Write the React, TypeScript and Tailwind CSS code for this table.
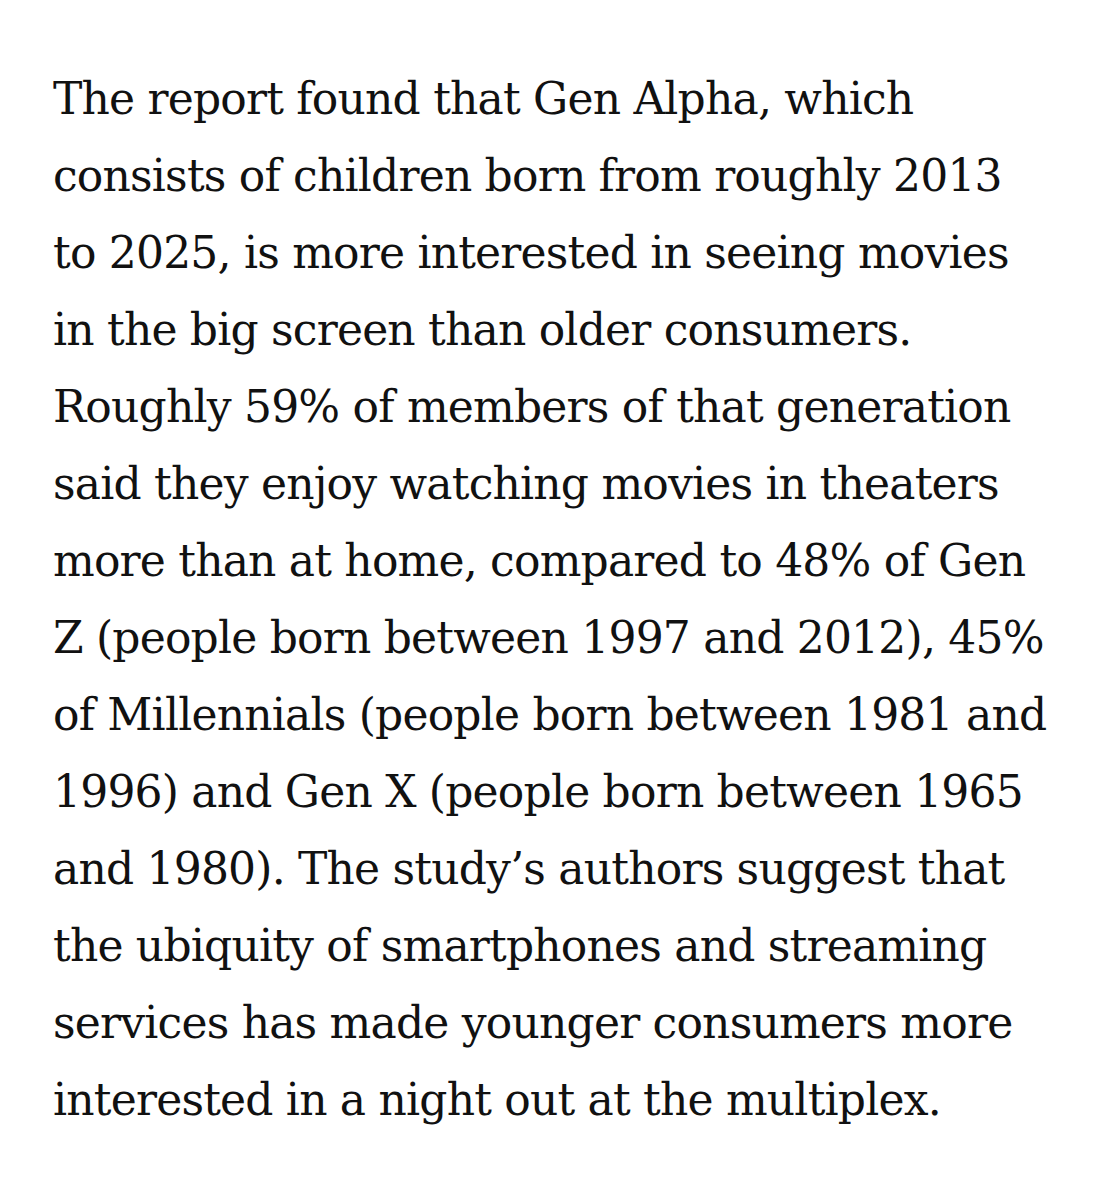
const lines = [
  "The report found that Gen Alpha, which",
  "consists of children born from roughly 2013",
  "to 2025, is more interested in seeing movies",
  "in the big screen than older consumers.",
  "Roughly 59% of members of that generation",
  "said they enjoy watching movies in theaters",
  "more than at home, compared to 48% of Gen",
  "Z (people born between 1997 and 2012), 45%",
  "of Millennials (people born between 1981 and",
  "1996) and Gen X (people born between 1965",
  "and 1980). The study\u2019s authors suggest that",
  "the ubiquity of smartphones and streaming",
  "services has made younger consumers more",
  "interested in a night out at the multiplex.",
];

export default function App() {
  return (
    <div className="min-h-[1200px] w-full bg-white pl-[53px] pt-[60px]">
      <p className="font-['DejaVu_Serif',serif] text-[44px] leading-[77px] tracking-[-0.8px] text-[#111111] whitespace-nowrap">
        {lines.map((line, i) => (
          <span key={i} className="block">
            {line}
          </span>
        ))}
      </p>
    </div>
  );
}
